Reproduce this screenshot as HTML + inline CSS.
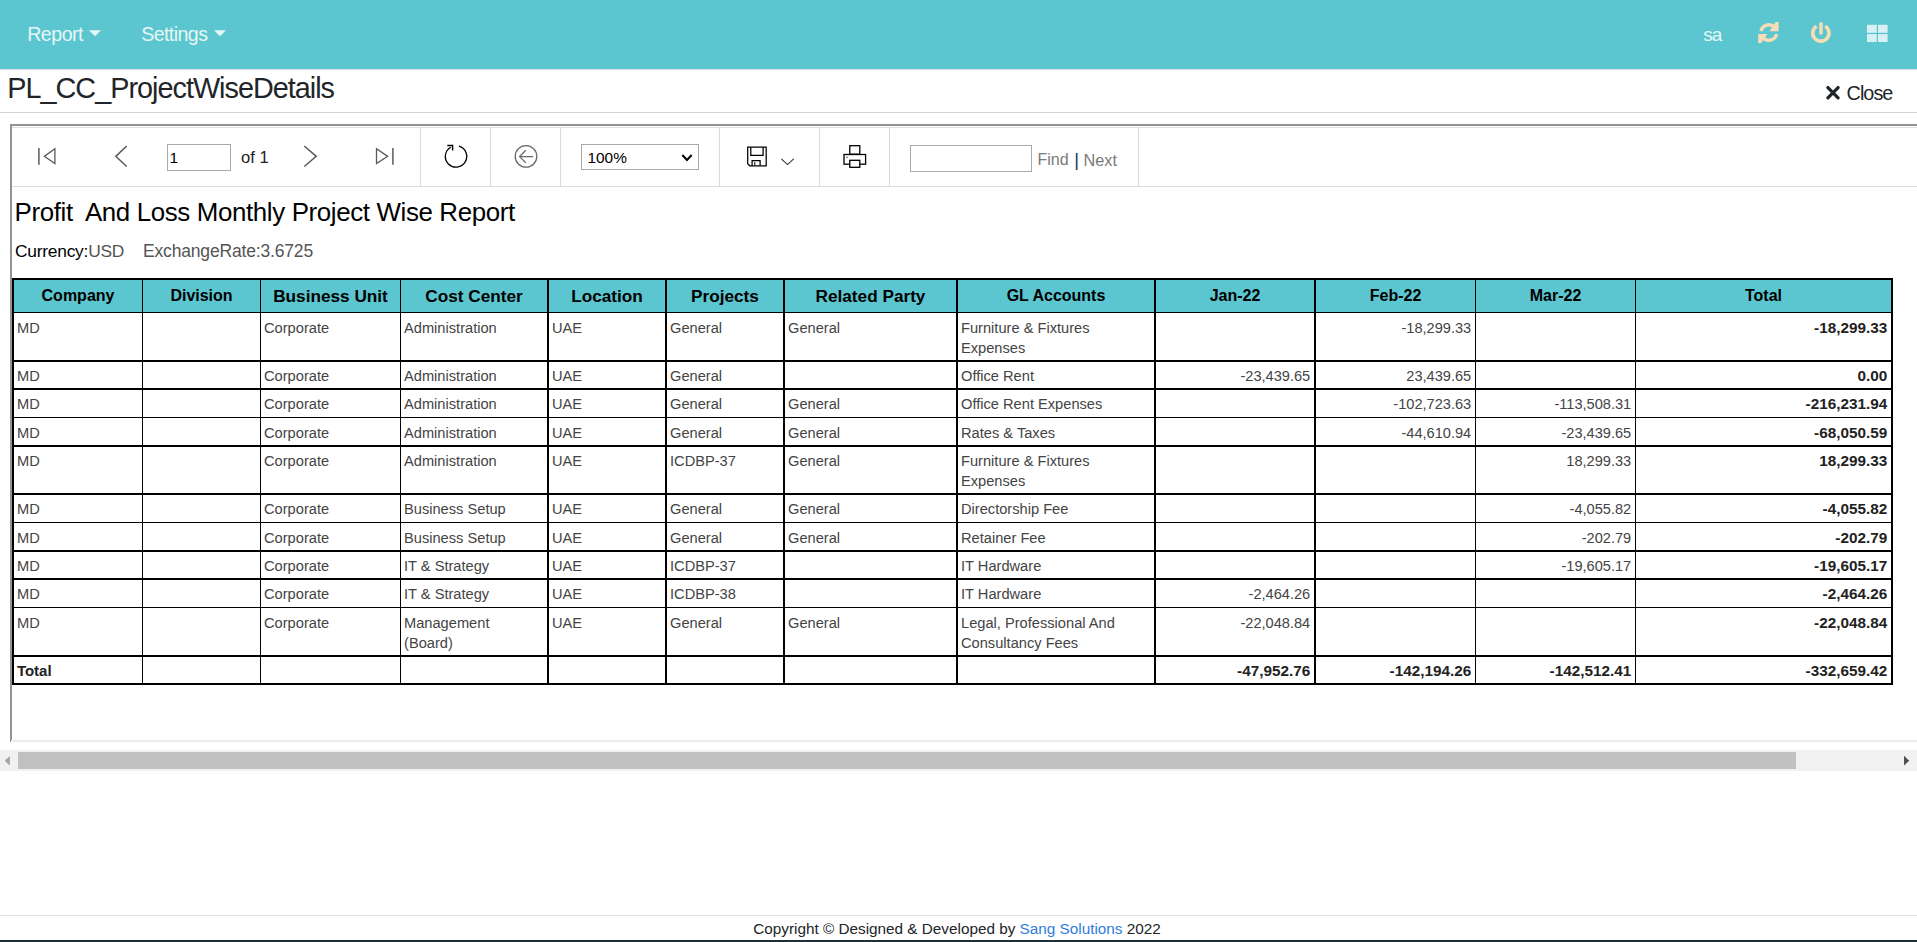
<!DOCTYPE html>
<html><head><meta charset="utf-8"><title>PL_CC_ProjectWiseDetails</title>
<style>
html,body{margin:0;padding:0;background:#fff;}
body{width:1917px;height:942px;overflow:hidden;position:relative;font-family:"Liberation Sans", sans-serif;}
</style></head><body>
<div style="position:absolute;left:0px;top:0px;width:1917px;height:69px;background:#5cc6d0;"></div><div style="position:absolute;left:0px;top:69px;width:1917px;height:1px;background:#e3e1e5;"></div><div style="position:absolute;top:25.12px;font-size:19.6px;line-height:19.6px;font-weight:normal;color:#e6f6f4;white-space:pre;letter-spacing:-0.5px;left:27.2px;">Report</div><div style="position:absolute;top:25.12px;font-size:19.6px;line-height:19.6px;font-weight:normal;color:#e6f6f4;white-space:pre;letter-spacing:-0.58px;left:141.2px;">Settings</div><svg style="position:absolute;left:0;top:0" width="1917" height="69"><polygon points="89,30.2 101,30.2 95,36.2" fill="#e6f6f4"/><polygon points="214,30.2 226,30.2 220,36.2" fill="#e6f6f4"/><g fill="none" stroke="#f5deb3" stroke-width="3.4"><path d="M1760.9,31.2 A7.9,7.9 0 0 1 1773.6,26.6"/><path d="M1776.6,34.0 A7.9,7.9 0 0 1 1763.9,38.6"/></g><polygon points="1775.6,22 1778.6,22 1778.6,31.3 1769.4,31.3" fill="#f5deb3"/><polygon points="1761.2,43 1758.2,43 1758.2,34 1767.4,34" fill="#f5deb3"/><path d="M1816.6,26.2 A8.1,8.1 0 1 0 1825.2,26.2" fill="none" stroke="#f5deb3" stroke-width="3.6"/><line x1="1821" y1="23.8" x2="1821" y2="33" stroke="#f5deb3" stroke-width="3.6" stroke-linecap="round"/><rect x="1867" y="24.8" width="9.8" height="8" fill="#d8f0f3"/><rect x="1878" y="24.8" width="9.6" height="8" fill="#d8f0f3"/><rect x="1867" y="34.1" width="9.8" height="7.9" fill="#d8f0f3"/><rect x="1878" y="34.1" width="9.6" height="7.9" fill="#d8f0f3"/></svg><div style="position:absolute;top:25.02px;font-size:19px;line-height:19px;font-weight:normal;color:#e6f6f4;white-space:pre;letter-spacing:-1.0px;left:1703.2px;">sa</div><div style="position:absolute;top:74.08px;font-size:28.8px;line-height:28.8px;font-weight:normal;color:#212529;white-space:pre;letter-spacing:-0.99px;left:7.3px;">PL_CC_ProjectWiseDetails</div><svg style="position:absolute;left:1820px;top:80px" width="30" height="26"><path d="M7.9,7.6 L18.1,17.8 M18.1,7.6 L7.9,17.8" stroke="#212529" stroke-width="3.3" stroke-linecap="round"/></svg><div style="position:absolute;top:84.02px;font-size:19.8px;line-height:19.8px;font-weight:normal;color:#212529;white-space:pre;letter-spacing:-0.95px;left:1846.6px;">Close</div><div style="position:absolute;left:0px;top:112px;width:1917px;height:1px;background:#d4d4d4;"></div><div style="position:absolute;left:10px;top:124px;width:1907px;height:2px;background:#939393;"></div><div style="position:absolute;left:10px;top:124px;width:2px;height:618px;background:#939393;"></div><div style="position:absolute;left:12px;top:127px;width:1905px;height:1px;background:#e2e2e2;"></div><div style="position:absolute;left:12px;top:186px;width:1905px;height:1px;background:#dcdcdc;"></div><div style="position:absolute;left:420px;top:128px;width:1px;height:58px;background:#dadada;"></div><div style="position:absolute;left:490px;top:128px;width:1px;height:58px;background:#dadada;"></div><div style="position:absolute;left:560px;top:128px;width:1px;height:58px;background:#dadada;"></div><div style="position:absolute;left:719px;top:128px;width:1px;height:58px;background:#dadada;"></div><div style="position:absolute;left:819px;top:128px;width:1px;height:58px;background:#dadada;"></div><div style="position:absolute;left:889px;top:128px;width:1px;height:58px;background:#dadada;"></div><div style="position:absolute;left:1138px;top:128px;width:1px;height:58px;background:#dadada;"></div><div style="position:absolute;left:167px;top:144px;width:62px;height:25px;border:1px solid #a9a9a9;background:#fff"></div><div style="position:absolute;top:150.19px;font-size:15.5px;line-height:15.5px;font-weight:normal;color:#000;white-space:pre;left:169.5px;">1</div><div style="position:absolute;top:150.23px;font-size:16.6px;line-height:16.6px;font-weight:normal;color:#222;white-space:pre;left:241px;">of 1</div><div style="position:absolute;left:581px;top:144px;width:116px;height:24px;border:1px solid #a9a9a9;background:#fff"></div><div style="position:absolute;top:150.04px;font-size:15.4px;line-height:15.4px;font-weight:normal;color:#000;white-space:pre;left:587.5px;">100%</div><div style="position:absolute;left:910px;top:145px;width:120px;height:25px;border:1px solid #a9a9a9;background:#fff"></div><div style="position:absolute;top:151.74px;font-size:16px;line-height:16px;font-weight:normal;color:#7a7a7a;white-space:pre;left:1037.5px;">Find</div><div style="position:absolute;top:150.93px;font-size:18.6px;line-height:18.6px;font-weight:normal;color:#1a3a5a;white-space:pre;left:1074.2px;">|</div><div style="position:absolute;top:151.58px;font-size:16.3px;line-height:16.3px;font-weight:normal;color:#7a7a7a;white-space:pre;left:1083.5px;">Next</div><svg style="position:absolute;left:0;top:120px" width="1200" height="60"><line x1="38.9" y1="28" x2="38.9" y2="44.7" stroke="#5a5a5a" stroke-width="1.5"/><polygon points="44.3,36.35 54.9,28.8 54.9,43.6" fill="none" stroke="#5a5a5a" stroke-width="1.3"/><polyline points="126.7,26 115.8,36.35 126.7,46.5" fill="none" stroke="#5a5a5a" stroke-width="1.5"/><polyline points="304.3,26 316.2,36.35 304.3,46.5" fill="none" stroke="#5a5a5a" stroke-width="1.5"/><polygon points="387.7,36.35 376.5,28.8 376.5,43.6" fill="none" stroke="#5a5a5a" stroke-width="1.3"/><line x1="392.9" y1="28" x2="392.9" y2="44.7" stroke="#5a5a5a" stroke-width="1.5"/><path d="M459.0,26.2 A10.7,10.7 0 1 1 450.7,27.2" fill="none" stroke="#000" stroke-width="1.3"/><polyline points="447.3,25.5 452.6,25.5 452.6,30.6" fill="none" stroke="#000" stroke-width="1.4"/><circle cx="526" cy="36.4" r="10.8" fill="none" stroke="#6a6a6a" stroke-width="1.3"/><path d="M519.6,36.6 L533.2,36.6 M525.8,30.3 L519.6,36.6 L525.8,42.8" fill="none" stroke="#6a6a6a" stroke-width="1.3"/><path d="M747.7,27.0 L766.2,27.0 L766.2,45.8 L749.7,45.8 L747.7,43.8 Z" fill="none" stroke="#000" stroke-width="1.25"/><path d="M750.8,27.0 L750.8,35.3 L763.1,35.3 L763.1,27.0" fill="none" stroke="#000" stroke-width="1.25"/><path d="M752.1,45.8 L752.1,40.6 L760.1,40.6 L760.1,45.8" fill="none" stroke="#000" stroke-width="1.25"/><line x1="754.8" y1="42" x2="754.8" y2="45.5" stroke="#000" stroke-width="1"/><polyline points="781.3,38.8 787.5,44.6 793.7,38.8" fill="none" stroke="#333" stroke-width="1.1"/><rect x="849.8" y="25.7" width="10" height="8.5" fill="none" stroke="#000" stroke-width="1.3"/><rect x="844" y="34.5" width="21.6" height="9.7" fill="#fff" stroke="#000" stroke-width="1.3"/><rect x="849.8" y="40.3" width="10" height="7" fill="#fff" stroke="#000" stroke-width="1.3"/><rect x="846.3" y="36.8" width="1.2" height="1.2" fill="#333"/><polyline points="682.3,35 687,40 691.7,35" fill="none" stroke="#000" stroke-width="2"/></svg><div style="position:absolute;top:199.95px;font-size:25.9px;line-height:25.9px;font-weight:normal;color:#000;white-space:pre;letter-spacing:-0.37px;left:14.5px;">Profit  And Loss Monthly Project Wise Report</div><div style="position:absolute;top:243.23px;font-size:17.4px;line-height:17.4px;font-weight:normal;color:#000;white-space:pre;letter-spacing:-0.25px;left:15px;">Currency:<span style="color:#555">USD</span></div><div style="position:absolute;top:243.48px;font-size:17.5px;line-height:17.5px;font-weight:normal;color:#555;white-space:pre;letter-spacing:-0.17px;left:143px;">ExchangeRate:3.6725</div><div style="position:absolute;left:12px;top:278px;width:1881px;height:35px;background:#5cc6d0;"></div><div style="position:absolute;left:12px;top:278px;width:1881px;height:2px;background:#000;"></div><div style="position:absolute;left:12px;top:312px;width:1881px;height:1px;background:#000;"></div><div style="position:absolute;left:12px;top:360px;width:1881px;height:2px;background:#000;"></div><div style="position:absolute;left:12px;top:388px;width:1881px;height:2px;background:#000;"></div><div style="position:absolute;left:12px;top:417px;width:1881px;height:1px;background:#000;"></div><div style="position:absolute;left:12px;top:445px;width:1881px;height:2px;background:#000;"></div><div style="position:absolute;left:12px;top:493px;width:1881px;height:2px;background:#000;"></div><div style="position:absolute;left:12px;top:522px;width:1881px;height:1px;background:#000;"></div><div style="position:absolute;left:12px;top:550px;width:1881px;height:2px;background:#000;"></div><div style="position:absolute;left:12px;top:578px;width:1881px;height:2px;background:#000;"></div><div style="position:absolute;left:12px;top:607px;width:1881px;height:1px;background:#000;"></div><div style="position:absolute;left:12px;top:655px;width:1881px;height:2px;background:#000;"></div><div style="position:absolute;left:12px;top:683px;width:1881px;height:2px;background:#000;"></div><div style="position:absolute;left:12px;top:278px;width:2px;height:407px;background:#000;"></div><div style="position:absolute;left:142px;top:278px;width:1px;height:407px;background:#000;"></div><div style="position:absolute;left:260px;top:278px;width:1px;height:407px;background:#000;"></div><div style="position:absolute;left:400px;top:278px;width:1px;height:407px;background:#000;"></div><div style="position:absolute;left:547px;top:278px;width:2px;height:407px;background:#000;"></div><div style="position:absolute;left:665px;top:278px;width:2px;height:407px;background:#000;"></div><div style="position:absolute;left:783px;top:278px;width:2px;height:407px;background:#000;"></div><div style="position:absolute;left:956px;top:278px;width:2px;height:407px;background:#000;"></div><div style="position:absolute;left:1154px;top:278px;width:2px;height:407px;background:#000;"></div><div style="position:absolute;left:1314px;top:278px;width:2px;height:407px;background:#000;"></div><div style="position:absolute;left:1475px;top:278px;width:1px;height:407px;background:#000;"></div><div style="position:absolute;left:1635px;top:278px;width:1px;height:407px;background:#000;"></div><div style="position:absolute;left:1891px;top:278px;width:2px;height:407px;background:#000;"></div><div style="position:absolute;top:287.74px;font-size:16px;line-height:16px;font-weight:bold;color:#000;white-space:pre;left:-222.0px;width:600px;text-align:center;">Company</div><div style="position:absolute;top:287.74px;font-size:16px;line-height:16px;font-weight:bold;color:#000;white-space:pre;left:-98.5px;width:600px;text-align:center;">Division</div><div style="position:absolute;top:288.13px;font-size:17.2px;line-height:17.2px;font-weight:bold;color:#000;white-space:pre;left:30.5px;width:600px;text-align:center;">Business Unit</div><div style="position:absolute;top:288.13px;font-size:17.2px;line-height:17.2px;font-weight:bold;color:#000;white-space:pre;left:174.0px;width:600px;text-align:center;">Cost Center</div><div style="position:absolute;top:288.13px;font-size:17.2px;line-height:17.2px;font-weight:bold;color:#000;white-space:pre;left:307.0px;width:600px;text-align:center;">Location</div><div style="position:absolute;top:288.13px;font-size:17.2px;line-height:17.2px;font-weight:bold;color:#000;white-space:pre;left:425.0px;width:600px;text-align:center;">Projects</div><div style="position:absolute;top:288.13px;font-size:17.2px;line-height:17.2px;font-weight:bold;color:#000;white-space:pre;left:570.5px;width:600px;text-align:center;">Related Party</div><div style="position:absolute;top:287.74px;font-size:16px;line-height:16px;font-weight:bold;color:#000;white-space:pre;left:756.0px;width:600px;text-align:center;">GL Accounts</div><div style="position:absolute;top:287.74px;font-size:16px;line-height:16px;font-weight:bold;color:#000;white-space:pre;left:935.0px;width:600px;text-align:center;">Jan-22</div><div style="position:absolute;top:287.74px;font-size:16px;line-height:16px;font-weight:bold;color:#000;white-space:pre;left:1095.5px;width:600px;text-align:center;">Feb-22</div><div style="position:absolute;top:287.74px;font-size:16px;line-height:16px;font-weight:bold;color:#000;white-space:pre;left:1255.5px;width:600px;text-align:center;">Mar-22</div><div style="position:absolute;top:287.74px;font-size:16px;line-height:16px;font-weight:bold;color:#000;white-space:pre;left:1463.5px;width:600px;text-align:center;">Total</div><div style="position:absolute;top:320.34px;font-size:15.2px;line-height:15.2px;font-weight:normal;color:#444;white-space:pre;transform:scaleX(0.964);transform-origin:left top;left:16.9px;">MD</div><div style="position:absolute;top:320.34px;font-size:15.2px;line-height:15.2px;font-weight:normal;color:#444;white-space:pre;transform:scaleX(0.964);transform-origin:left top;left:263.9px;">Corporate</div><div style="position:absolute;top:320.34px;font-size:15.2px;line-height:15.2px;font-weight:normal;color:#444;white-space:pre;transform:scaleX(0.964);transform-origin:left top;left:403.9px;">Administration</div><div style="position:absolute;top:320.34px;font-size:15.2px;line-height:15.2px;font-weight:normal;color:#444;white-space:pre;transform:scaleX(0.964);transform-origin:left top;left:551.9px;">UAE</div><div style="position:absolute;top:320.34px;font-size:15.2px;line-height:15.2px;font-weight:normal;color:#444;white-space:pre;transform:scaleX(0.964);transform-origin:left top;left:669.9px;">General</div><div style="position:absolute;top:320.34px;font-size:15.2px;line-height:15.2px;font-weight:normal;color:#444;white-space:pre;transform:scaleX(0.964);transform-origin:left top;left:787.9px;">General</div><div style="position:absolute;top:320.34px;font-size:15.2px;line-height:15.2px;font-weight:normal;color:#444;white-space:pre;transform:scaleX(0.964);transform-origin:left top;left:960.9px;">Furniture &amp; Fixtures</div><div style="position:absolute;top:340.34px;font-size:15.2px;line-height:15.2px;font-weight:normal;color:#444;white-space:pre;transform:scaleX(0.964);transform-origin:left top;left:960.9px;">Expenses</div><div style="position:absolute;top:320.74px;font-size:14.6px;line-height:14.6px;font-weight:normal;color:#444;white-space:pre;right:445.79999999999995px;">-18,299.33</div><div style="position:absolute;top:320.39px;font-size:15.3px;line-height:15.3px;font-weight:bold;color:#222;white-space:pre;right:29.799999999999955px;">-18,299.33</div><div style="position:absolute;top:368.34px;font-size:15.2px;line-height:15.2px;font-weight:normal;color:#444;white-space:pre;transform:scaleX(0.964);transform-origin:left top;left:16.9px;">MD</div><div style="position:absolute;top:368.34px;font-size:15.2px;line-height:15.2px;font-weight:normal;color:#444;white-space:pre;transform:scaleX(0.964);transform-origin:left top;left:263.9px;">Corporate</div><div style="position:absolute;top:368.34px;font-size:15.2px;line-height:15.2px;font-weight:normal;color:#444;white-space:pre;transform:scaleX(0.964);transform-origin:left top;left:403.9px;">Administration</div><div style="position:absolute;top:368.34px;font-size:15.2px;line-height:15.2px;font-weight:normal;color:#444;white-space:pre;transform:scaleX(0.964);transform-origin:left top;left:551.9px;">UAE</div><div style="position:absolute;top:368.34px;font-size:15.2px;line-height:15.2px;font-weight:normal;color:#444;white-space:pre;transform:scaleX(0.964);transform-origin:left top;left:669.9px;">General</div><div style="position:absolute;top:368.34px;font-size:15.2px;line-height:15.2px;font-weight:normal;color:#444;white-space:pre;transform:scaleX(0.964);transform-origin:left top;left:960.9px;">Office Rent</div><div style="position:absolute;top:368.74px;font-size:14.6px;line-height:14.6px;font-weight:normal;color:#444;white-space:pre;right:606.8px;">-23,439.65</div><div style="position:absolute;top:368.74px;font-size:14.6px;line-height:14.6px;font-weight:normal;color:#444;white-space:pre;right:445.79999999999995px;">23,439.65</div><div style="position:absolute;top:368.39px;font-size:15.3px;line-height:15.3px;font-weight:bold;color:#222;white-space:pre;right:29.799999999999955px;">0.00</div><div style="position:absolute;top:396.34px;font-size:15.2px;line-height:15.2px;font-weight:normal;color:#444;white-space:pre;transform:scaleX(0.964);transform-origin:left top;left:16.9px;">MD</div><div style="position:absolute;top:396.34px;font-size:15.2px;line-height:15.2px;font-weight:normal;color:#444;white-space:pre;transform:scaleX(0.964);transform-origin:left top;left:263.9px;">Corporate</div><div style="position:absolute;top:396.34px;font-size:15.2px;line-height:15.2px;font-weight:normal;color:#444;white-space:pre;transform:scaleX(0.964);transform-origin:left top;left:403.9px;">Administration</div><div style="position:absolute;top:396.34px;font-size:15.2px;line-height:15.2px;font-weight:normal;color:#444;white-space:pre;transform:scaleX(0.964);transform-origin:left top;left:551.9px;">UAE</div><div style="position:absolute;top:396.34px;font-size:15.2px;line-height:15.2px;font-weight:normal;color:#444;white-space:pre;transform:scaleX(0.964);transform-origin:left top;left:669.9px;">General</div><div style="position:absolute;top:396.34px;font-size:15.2px;line-height:15.2px;font-weight:normal;color:#444;white-space:pre;transform:scaleX(0.964);transform-origin:left top;left:787.9px;">General</div><div style="position:absolute;top:396.34px;font-size:15.2px;line-height:15.2px;font-weight:normal;color:#444;white-space:pre;transform:scaleX(0.964);transform-origin:left top;left:960.9px;">Office Rent Expenses</div><div style="position:absolute;top:396.74px;font-size:14.6px;line-height:14.6px;font-weight:normal;color:#444;white-space:pre;right:445.79999999999995px;">-102,723.63</div><div style="position:absolute;top:396.74px;font-size:14.6px;line-height:14.6px;font-weight:normal;color:#444;white-space:pre;right:285.79999999999995px;">-113,508.31</div><div style="position:absolute;top:396.39px;font-size:15.3px;line-height:15.3px;font-weight:bold;color:#222;white-space:pre;right:29.799999999999955px;">-216,231.94</div><div style="position:absolute;top:425.34px;font-size:15.2px;line-height:15.2px;font-weight:normal;color:#444;white-space:pre;transform:scaleX(0.964);transform-origin:left top;left:16.9px;">MD</div><div style="position:absolute;top:425.34px;font-size:15.2px;line-height:15.2px;font-weight:normal;color:#444;white-space:pre;transform:scaleX(0.964);transform-origin:left top;left:263.9px;">Corporate</div><div style="position:absolute;top:425.34px;font-size:15.2px;line-height:15.2px;font-weight:normal;color:#444;white-space:pre;transform:scaleX(0.964);transform-origin:left top;left:403.9px;">Administration</div><div style="position:absolute;top:425.34px;font-size:15.2px;line-height:15.2px;font-weight:normal;color:#444;white-space:pre;transform:scaleX(0.964);transform-origin:left top;left:551.9px;">UAE</div><div style="position:absolute;top:425.34px;font-size:15.2px;line-height:15.2px;font-weight:normal;color:#444;white-space:pre;transform:scaleX(0.964);transform-origin:left top;left:669.9px;">General</div><div style="position:absolute;top:425.34px;font-size:15.2px;line-height:15.2px;font-weight:normal;color:#444;white-space:pre;transform:scaleX(0.964);transform-origin:left top;left:787.9px;">General</div><div style="position:absolute;top:425.34px;font-size:15.2px;line-height:15.2px;font-weight:normal;color:#444;white-space:pre;transform:scaleX(0.964);transform-origin:left top;left:960.9px;">Rates &amp; Taxes</div><div style="position:absolute;top:425.74px;font-size:14.6px;line-height:14.6px;font-weight:normal;color:#444;white-space:pre;right:445.79999999999995px;">-44,610.94</div><div style="position:absolute;top:425.74px;font-size:14.6px;line-height:14.6px;font-weight:normal;color:#444;white-space:pre;right:285.79999999999995px;">-23,439.65</div><div style="position:absolute;top:425.39px;font-size:15.3px;line-height:15.3px;font-weight:bold;color:#222;white-space:pre;right:29.799999999999955px;">-68,050.59</div><div style="position:absolute;top:453.34px;font-size:15.2px;line-height:15.2px;font-weight:normal;color:#444;white-space:pre;transform:scaleX(0.964);transform-origin:left top;left:16.9px;">MD</div><div style="position:absolute;top:453.34px;font-size:15.2px;line-height:15.2px;font-weight:normal;color:#444;white-space:pre;transform:scaleX(0.964);transform-origin:left top;left:263.9px;">Corporate</div><div style="position:absolute;top:453.34px;font-size:15.2px;line-height:15.2px;font-weight:normal;color:#444;white-space:pre;transform:scaleX(0.964);transform-origin:left top;left:403.9px;">Administration</div><div style="position:absolute;top:453.34px;font-size:15.2px;line-height:15.2px;font-weight:normal;color:#444;white-space:pre;transform:scaleX(0.964);transform-origin:left top;left:551.9px;">UAE</div><div style="position:absolute;top:453.34px;font-size:15.2px;line-height:15.2px;font-weight:normal;color:#444;white-space:pre;transform:scaleX(0.964);transform-origin:left top;left:669.9px;">ICDBP-37</div><div style="position:absolute;top:453.34px;font-size:15.2px;line-height:15.2px;font-weight:normal;color:#444;white-space:pre;transform:scaleX(0.964);transform-origin:left top;left:787.9px;">General</div><div style="position:absolute;top:453.34px;font-size:15.2px;line-height:15.2px;font-weight:normal;color:#444;white-space:pre;transform:scaleX(0.964);transform-origin:left top;left:960.9px;">Furniture &amp; Fixtures</div><div style="position:absolute;top:473.34px;font-size:15.2px;line-height:15.2px;font-weight:normal;color:#444;white-space:pre;transform:scaleX(0.964);transform-origin:left top;left:960.9px;">Expenses</div><div style="position:absolute;top:453.74px;font-size:14.6px;line-height:14.6px;font-weight:normal;color:#444;white-space:pre;right:285.79999999999995px;">18,299.33</div><div style="position:absolute;top:453.39px;font-size:15.3px;line-height:15.3px;font-weight:bold;color:#222;white-space:pre;right:29.799999999999955px;">18,299.33</div><div style="position:absolute;top:501.34px;font-size:15.2px;line-height:15.2px;font-weight:normal;color:#444;white-space:pre;transform:scaleX(0.964);transform-origin:left top;left:16.9px;">MD</div><div style="position:absolute;top:501.34px;font-size:15.2px;line-height:15.2px;font-weight:normal;color:#444;white-space:pre;transform:scaleX(0.964);transform-origin:left top;left:263.9px;">Corporate</div><div style="position:absolute;top:501.34px;font-size:15.2px;line-height:15.2px;font-weight:normal;color:#444;white-space:pre;transform:scaleX(0.964);transform-origin:left top;left:403.9px;">Business Setup</div><div style="position:absolute;top:501.34px;font-size:15.2px;line-height:15.2px;font-weight:normal;color:#444;white-space:pre;transform:scaleX(0.964);transform-origin:left top;left:551.9px;">UAE</div><div style="position:absolute;top:501.34px;font-size:15.2px;line-height:15.2px;font-weight:normal;color:#444;white-space:pre;transform:scaleX(0.964);transform-origin:left top;left:669.9px;">General</div><div style="position:absolute;top:501.34px;font-size:15.2px;line-height:15.2px;font-weight:normal;color:#444;white-space:pre;transform:scaleX(0.964);transform-origin:left top;left:787.9px;">General</div><div style="position:absolute;top:501.34px;font-size:15.2px;line-height:15.2px;font-weight:normal;color:#444;white-space:pre;transform:scaleX(0.964);transform-origin:left top;left:960.9px;">Directorship Fee</div><div style="position:absolute;top:501.74px;font-size:14.6px;line-height:14.6px;font-weight:normal;color:#444;white-space:pre;right:285.79999999999995px;">-4,055.82</div><div style="position:absolute;top:501.39px;font-size:15.3px;line-height:15.3px;font-weight:bold;color:#222;white-space:pre;right:29.799999999999955px;">-4,055.82</div><div style="position:absolute;top:530.34px;font-size:15.2px;line-height:15.2px;font-weight:normal;color:#444;white-space:pre;transform:scaleX(0.964);transform-origin:left top;left:16.9px;">MD</div><div style="position:absolute;top:530.34px;font-size:15.2px;line-height:15.2px;font-weight:normal;color:#444;white-space:pre;transform:scaleX(0.964);transform-origin:left top;left:263.9px;">Corporate</div><div style="position:absolute;top:530.34px;font-size:15.2px;line-height:15.2px;font-weight:normal;color:#444;white-space:pre;transform:scaleX(0.964);transform-origin:left top;left:403.9px;">Business Setup</div><div style="position:absolute;top:530.34px;font-size:15.2px;line-height:15.2px;font-weight:normal;color:#444;white-space:pre;transform:scaleX(0.964);transform-origin:left top;left:551.9px;">UAE</div><div style="position:absolute;top:530.34px;font-size:15.2px;line-height:15.2px;font-weight:normal;color:#444;white-space:pre;transform:scaleX(0.964);transform-origin:left top;left:669.9px;">General</div><div style="position:absolute;top:530.34px;font-size:15.2px;line-height:15.2px;font-weight:normal;color:#444;white-space:pre;transform:scaleX(0.964);transform-origin:left top;left:787.9px;">General</div><div style="position:absolute;top:530.34px;font-size:15.2px;line-height:15.2px;font-weight:normal;color:#444;white-space:pre;transform:scaleX(0.964);transform-origin:left top;left:960.9px;">Retainer Fee</div><div style="position:absolute;top:530.74px;font-size:14.6px;line-height:14.6px;font-weight:normal;color:#444;white-space:pre;right:285.79999999999995px;">-202.79</div><div style="position:absolute;top:530.39px;font-size:15.3px;line-height:15.3px;font-weight:bold;color:#222;white-space:pre;right:29.799999999999955px;">-202.79</div><div style="position:absolute;top:558.34px;font-size:15.2px;line-height:15.2px;font-weight:normal;color:#444;white-space:pre;transform:scaleX(0.964);transform-origin:left top;left:16.9px;">MD</div><div style="position:absolute;top:558.34px;font-size:15.2px;line-height:15.2px;font-weight:normal;color:#444;white-space:pre;transform:scaleX(0.964);transform-origin:left top;left:263.9px;">Corporate</div><div style="position:absolute;top:558.34px;font-size:15.2px;line-height:15.2px;font-weight:normal;color:#444;white-space:pre;transform:scaleX(0.964);transform-origin:left top;left:403.9px;">IT &amp; Strategy</div><div style="position:absolute;top:558.34px;font-size:15.2px;line-height:15.2px;font-weight:normal;color:#444;white-space:pre;transform:scaleX(0.964);transform-origin:left top;left:551.9px;">UAE</div><div style="position:absolute;top:558.34px;font-size:15.2px;line-height:15.2px;font-weight:normal;color:#444;white-space:pre;transform:scaleX(0.964);transform-origin:left top;left:669.9px;">ICDBP-37</div><div style="position:absolute;top:558.34px;font-size:15.2px;line-height:15.2px;font-weight:normal;color:#444;white-space:pre;transform:scaleX(0.964);transform-origin:left top;left:960.9px;">IT Hardware</div><div style="position:absolute;top:558.74px;font-size:14.6px;line-height:14.6px;font-weight:normal;color:#444;white-space:pre;right:285.79999999999995px;">-19,605.17</div><div style="position:absolute;top:558.39px;font-size:15.3px;line-height:15.3px;font-weight:bold;color:#222;white-space:pre;right:29.799999999999955px;">-19,605.17</div><div style="position:absolute;top:586.34px;font-size:15.2px;line-height:15.2px;font-weight:normal;color:#444;white-space:pre;transform:scaleX(0.964);transform-origin:left top;left:16.9px;">MD</div><div style="position:absolute;top:586.34px;font-size:15.2px;line-height:15.2px;font-weight:normal;color:#444;white-space:pre;transform:scaleX(0.964);transform-origin:left top;left:263.9px;">Corporate</div><div style="position:absolute;top:586.34px;font-size:15.2px;line-height:15.2px;font-weight:normal;color:#444;white-space:pre;transform:scaleX(0.964);transform-origin:left top;left:403.9px;">IT &amp; Strategy</div><div style="position:absolute;top:586.34px;font-size:15.2px;line-height:15.2px;font-weight:normal;color:#444;white-space:pre;transform:scaleX(0.964);transform-origin:left top;left:551.9px;">UAE</div><div style="position:absolute;top:586.34px;font-size:15.2px;line-height:15.2px;font-weight:normal;color:#444;white-space:pre;transform:scaleX(0.964);transform-origin:left top;left:669.9px;">ICDBP-38</div><div style="position:absolute;top:586.34px;font-size:15.2px;line-height:15.2px;font-weight:normal;color:#444;white-space:pre;transform:scaleX(0.964);transform-origin:left top;left:960.9px;">IT Hardware</div><div style="position:absolute;top:586.74px;font-size:14.6px;line-height:14.6px;font-weight:normal;color:#444;white-space:pre;right:606.8px;">-2,464.26</div><div style="position:absolute;top:586.39px;font-size:15.3px;line-height:15.3px;font-weight:bold;color:#222;white-space:pre;right:29.799999999999955px;">-2,464.26</div><div style="position:absolute;top:615.34px;font-size:15.2px;line-height:15.2px;font-weight:normal;color:#444;white-space:pre;transform:scaleX(0.964);transform-origin:left top;left:16.9px;">MD</div><div style="position:absolute;top:615.34px;font-size:15.2px;line-height:15.2px;font-weight:normal;color:#444;white-space:pre;transform:scaleX(0.964);transform-origin:left top;left:263.9px;">Corporate</div><div style="position:absolute;top:615.34px;font-size:15.2px;line-height:15.2px;font-weight:normal;color:#444;white-space:pre;transform:scaleX(0.964);transform-origin:left top;left:403.9px;">Management</div><div style="position:absolute;top:635.34px;font-size:15.2px;line-height:15.2px;font-weight:normal;color:#444;white-space:pre;transform:scaleX(0.964);transform-origin:left top;left:403.9px;">(Board)</div><div style="position:absolute;top:615.34px;font-size:15.2px;line-height:15.2px;font-weight:normal;color:#444;white-space:pre;transform:scaleX(0.964);transform-origin:left top;left:551.9px;">UAE</div><div style="position:absolute;top:615.34px;font-size:15.2px;line-height:15.2px;font-weight:normal;color:#444;white-space:pre;transform:scaleX(0.964);transform-origin:left top;left:669.9px;">General</div><div style="position:absolute;top:615.34px;font-size:15.2px;line-height:15.2px;font-weight:normal;color:#444;white-space:pre;transform:scaleX(0.964);transform-origin:left top;left:787.9px;">General</div><div style="position:absolute;top:615.34px;font-size:15.2px;line-height:15.2px;font-weight:normal;color:#444;white-space:pre;transform:scaleX(0.964);transform-origin:left top;left:960.9px;">Legal, Professional And</div><div style="position:absolute;top:635.34px;font-size:15.2px;line-height:15.2px;font-weight:normal;color:#444;white-space:pre;transform:scaleX(0.964);transform-origin:left top;left:960.9px;">Consultancy Fees</div><div style="position:absolute;top:615.74px;font-size:14.6px;line-height:14.6px;font-weight:normal;color:#444;white-space:pre;right:606.8px;">-22,048.84</div><div style="position:absolute;top:615.39px;font-size:15.3px;line-height:15.3px;font-weight:bold;color:#222;white-space:pre;right:29.799999999999955px;">-22,048.84</div><div style="position:absolute;top:663.44px;font-size:15px;line-height:15px;font-weight:bold;color:#222;white-space:pre;left:16.9px;">Total</div><div style="position:absolute;top:663.39px;font-size:15.3px;line-height:15.3px;font-weight:bold;color:#222;white-space:pre;right:606.8px;">-47,952.76</div><div style="position:absolute;top:663.39px;font-size:15.3px;line-height:15.3px;font-weight:bold;color:#222;white-space:pre;right:445.79999999999995px;">-142,194.26</div><div style="position:absolute;top:663.39px;font-size:15.3px;line-height:15.3px;font-weight:bold;color:#222;white-space:pre;right:285.79999999999995px;">-142,512.41</div><div style="position:absolute;top:663.39px;font-size:15.3px;line-height:15.3px;font-weight:bold;color:#222;white-space:pre;right:29.799999999999955px;">-332,659.42</div><div style="position:absolute;left:11px;top:740px;width:1906px;height:2px;background:#ececec;"></div><div style="position:absolute;left:0px;top:750px;width:1917px;height:21px;background:#f1f1f1;"></div><div style="position:absolute;left:18px;top:752px;width:1778px;height:17px;background:#c1c1c1;"></div><svg style="position:absolute;left:0;top:750px" width="1917" height="21"><polygon points="4.8,10.8 9.8,6 9.8,15.6" fill="#a3a3a3"/><polygon points="1909.2,10.8 1904,5.8 1904,15.4" fill="#505050"/></svg><div style="position:absolute;left:0px;top:915px;width:1917px;height:1px;background:#dee2e6;"></div><div style="position:absolute;top:920.79px;font-size:15.3px;line-height:15.3px;font-weight:normal;color:#212529;white-space:pre;left:657.0px;width:600px;text-align:center;">Copyright © Designed &amp; Developed by <span style="color:#2f7de1">Sang Solutions</span> 2022</div><div style="position:absolute;left:0px;top:940px;width:1917px;height:2px;background:#1d303a;"></div>
</body></html>
